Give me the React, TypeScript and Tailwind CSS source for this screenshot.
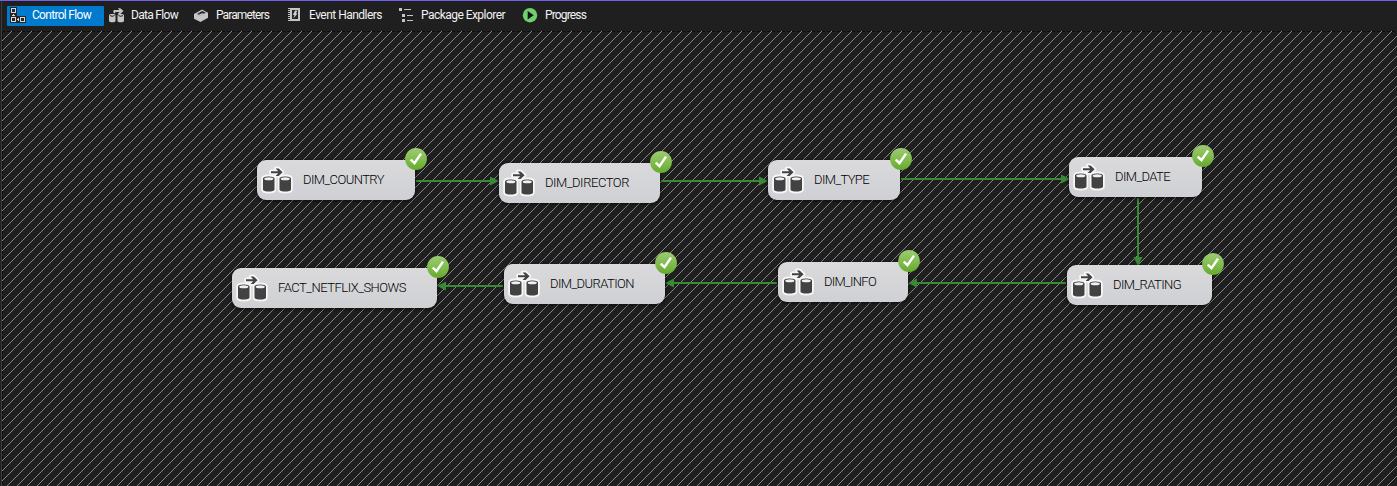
import React from "react";

type NodeSpec = { label: string; box: string; text: string };

const nodes: NodeSpec[] = [
  { label: "DIM_COUNTRY", box: "left-[255px] top-[129px] w-[158px]", text: "w-[81px]" },
  { label: "DIM_DIRECTOR", box: "left-[497px] top-[132px] w-[161px]", text: "w-[84px]" },
  { label: "DIM_TYPE", box: "left-[766px] top-[129px] w-[132px]", text: "w-[55px]" },
  { label: "DIM_DATE", box: "left-[1067px] top-[126px] w-[133px]", text: "w-[55px]" },
  { label: "DIM_RATING", box: "left-[1065px] top-[234px] w-[145px]", text: "w-[68px]" },
  { label: "DIM_INFO", box: "left-[776px] top-[231px] w-[130px]", text: "w-[52px]" },
  { label: "DIM_DURATION", box: "left-[502px] top-[233px] w-[161px]", text: "w-[84px]" },
  { label: "FACT_NETFLIX_SHOWS", box: "left-[230px] top-[237px] w-[205px]", text: "w-[128px]" },
];

const links = [
  { line: "M416 181H491", head: "M490 176.5L499 181L490 185.5Z" },
  { line: "M661 181H760", head: "M759 176.5L768 181L759 185.5Z" },
  { line: "M901 179H1062", head: "M1061 174.5L1070 179L1061 183.5Z" },
  { line: "M1138 198V258", head: "M1133.5 257H1142.5L1138 266Z" },
  { line: "M1066 283H916", head: "M917 278.5L908 283L917 287.5Z" },
  { line: "M777 283H673", head: "M674 278.5L665 283L674 287.5Z" },
  { line: "M503 286H445", head: "M446 281.5L437 286L446 290.5Z" },
];

const hatch = [0, 1, 2, 3, 4, 5, 6, 7, 8, 9];

function Cylinders() {
  const shape =
    "M6 18.5C6 15.7 17.5 15.7 17.5 18.5V29.5C17.5 32.3 6 32.3 6 29.5ZM22.5 18.5C22.5 15.7 34 15.7 34 18.5V29.5C34 32.3 22.5 32.3 22.5 29.5Z";
  const arrow = "M14 11.2H21.2L18.6 8.4H21.6L25.6 12.2L21.6 16H18.6L21.2 13.2H14Z";
  return (
    <svg className="h-10 w-10 shrink-0" viewBox="0 0 40 40">
      <g fill="#f6f6f6" stroke="#f6f6f6" strokeWidth="3.6" strokeLinejoin="round">
        <path d={shape} />
        <path d={arrow} />
      </g>
      <path d={shape} fill="#424242" />
      <ellipse cx="11.75" cy="18.7" rx="4.5" ry="1.5" fill="#f0eff1" />
      <ellipse cx="28.25" cy="18.7" rx="4.5" ry="1.5" fill="#f0eff1" />
      <path d={arrow} fill="#424242" />
    </svg>
  );
}

function Success() {
  return (
    <svg className="absolute -right-3 -top-3 h-[22px] w-[22px]" viewBox="0 0 22 22">
      <defs>
        <linearGradient id="success" x1="0" y1="0" x2="0" y2="1">
          <stop offset="0" stopColor="#9ccb72" />
          <stop offset="0.5" stopColor="#83bd50" />
          <stop offset="1" stopColor="#66a92d" />
        </linearGradient>
      </defs>
      <circle cx="11" cy="11" r="10.9" fill="url(#success)" />
      <path d="M5.7 11.6L9.5 15.2L16 5.6" fill="none" stroke="#fff" strokeWidth="2.5" />
    </svg>
  );
}

function TaskNode({ label, box, text }: NodeSpec) {
  return (
    <div
      className={`absolute flex h-10 items-center rounded-[9px] bg-gradient-to-b from-[#dadadd] to-[#cfd0d3] shadow-[0_1px_3px_1px_rgba(0,0,0,0.45)] ${box}`}
    >
      <Cylinders />
      <Fit text={label} className={`ml-[6px] text-[13px] font-light text-black ${text}`} />
      <Success />
    </div>
  );
}

/* Spreads the label's letters so that it fills the width of its slot. */
function Fit({ text, className }: { text: string; className: string }) {
  const slot = React.useRef<HTMLSpanElement>(null);
  const inner = React.useRef<HTMLSpanElement>(null);
  const [spacing, setSpacing] = React.useState(0);
  React.useLayoutEffect(() => {
    if (!slot.current || !inner.current) return;
    const natural = inner.current.getBoundingClientRect().width;
    setSpacing((slot.current.clientWidth - natural) / text.length);
  }, [text]);
  return (
    <span ref={slot} className={`block shrink-0 whitespace-nowrap leading-4 ${className}`}>
      <span ref={inner} style={{ letterSpacing: spacing }}>
        {text}
      </span>
    </span>
  );
}

function ControlFlowIcon() {
  return (
    <svg className="mb-0.5 h-4 w-4 shrink-0" viewBox="0 0 16 16" shapeRendering="crispEdges">
      <path d="M0 0H7V9H16V16H0Z" fill="#252526" />
      <path d="M1 1H6V6H1ZM1 10H6V15H1ZM10 10H15V15H10Z" fill="#d8d8d8" />
      <path d="M2 2H5V5H2ZM2 11H5V14H2ZM11 11H14V14H11Z" fill="#252526" />
      <path d="M3 7H4V9H3ZM2 8H5V9H2ZM7 12H9V13H7ZM8 11H9V14H8Z" fill="#d8d8d8" />
    </svg>
  );
}

function DataFlowIcon() {
  return (
    <svg className="h-4 w-4 shrink-0" viewBox="0 0 16 16" fill="#c5c5c5">
      <path d="M0 7.2C0 5.6 6.5 5.6 6.5 7.2V13C6.5 14.8 0 14.8 0 13ZM8.5 7.2C8.5 5.6 15 5.6 15 7.2V13C15 14.8 8.5 14.8 8.5 13Z" />
      <path d="M1 7.6Q3.25 9 5.5 7.6M9.5 7.6Q11.75 9 14 7.6" fill="none" stroke="#1f1f1f" strokeWidth="1" />
      <path d="M4.5 2H10.5L8.7 .2H11.3L14.5 3L11.3 5.9H8.7L10.5 4H6.3V5.2H4.5Z" />
    </svg>
  );
}

function ParametersIcon() {
  return (
    <svg className="h-4 w-4 shrink-0" viewBox="0 0 16 16">
      <path d="M0 6L8 1.6L14 4.8V9.8L6.5 14L0 10.8Z" fill="#c5c5c5" />
      <path d="M3 6L8.2 3.1L11.8 4.8L6.5 7.8Z" fill="#252526" />
      <path d="M4.2 6.8L8.3 5.2L10.5 5.8L6.5 8Z" fill="#c5c5c5" />
    </svg>
  );
}

function EventIcon() {
  return (
    <svg className="h-4 w-4 shrink-0" viewBox="0 0 16 16">
      <path d="M2 0H12V13H2Z" fill="#c5c5c5" />
      <path d="M4 2H10V11H4Z" fill="#252526" />
      <path d="M0 .5H3M0 2.5H3M0 4.5H3M0 6.5H3M0 8.5H3M0 10.5H3M0 12.5H3" stroke="#c5c5c5" />
      <path d="M7 2.5H9.4L8 5.5H9.5L5.4 10.5L6.5 7H4.8Z" fill="#d0d0d0" />
    </svg>
  );
}

function PackageIcon() {
  return (
    <svg className="h-4 w-4 shrink-0" viewBox="0 0 16 16" fill="#c5c5c5" shapeRendering="crispEdges">
      <path d="M0 0H3V3H0ZM5 1H12V2H5ZM3 6H6V9H3ZM8 7H14V8H8ZM3 11H6V14H3ZM8 12H14V13H8Z" />
    </svg>
  );
}

function ProgressIcon() {
  return (
    <svg className="h-4 w-4 shrink-0" viewBox="0 0 16 16">
      <circle cx="8" cy="7.2" r="7.2" fill="#6fcf70" />
      <path d="M5.7 3L11.7 7.2L5.7 11.4Z" fill="#111" />
    </svg>
  );
}

const tabs = [
  { label: "Data Flow", icon: <DataFlowIcon />, tab: "w-[85px]", text: "w-[47px] ml-[6px]" },
  { label: "Parameters", icon: <ParametersIcon />, tab: "w-[94px]", text: "w-[53px] ml-[6px]" },
  { label: "Event Handlers", icon: <EventIcon />, tab: "w-[111px]", text: "w-[73px] ml-[5px]" },
  { label: "Package Explorer", icon: <PackageIcon />, tab: "w-[123px]", text: "w-[84px] ml-[6px]" },
  { label: "Progress", icon: <ProgressIcon />, tab: "w-[80px]", text: "w-[41px] ml-[7px]" },
];

export default function App() {
  return (
    <div className="flex h-[486px] w-[1397px] flex-col overflow-hidden border-t border-[#7160e8] bg-[#1f1f1f] font-['Roboto',sans-serif]">
      <div className="flex min-h-0 flex-1">
        <div className="w-0.5 shrink-0 border-r border-[#3d3d3d]" />
        <main className="flex min-w-0 flex-1 flex-col">
          <nav className="flex h-[30px] shrink-0 items-start pl-[5px] pt-[5px] text-[12px] text-[#f1f1f1]">
            <div className="mr-[5px] flex h-5 w-[97px] items-center rounded-[1px] bg-[#007acc] pl-[3px]">
              <ControlFlowIcon />
              <Fit text="Control Flow" className="ml-[6px] w-[59px] pb-0.5 text-white" />
            </div>
            {tabs.map((t) => (
              <div key={t.label} className={`flex h-5 items-center ${t.tab}`}>
                {t.icon}
                <Fit text={t.label} className={`pb-0.5 ${t.text}`} />
              </div>
            ))}
          </nav>
          <section className="relative flex-1">
            <svg className="absolute inset-0 h-full w-full" viewBox="2 31 1395 455">
              <defs>
                <pattern id="hatch" width="10" height="10" patternUnits="userSpaceOnUse">
                  {hatch.map((i) => (
                    <rect key={i} x={i} y={(12 - i) % 10} width="1" height="1" fill="#888888" />
                  ))}
                </pattern>
              </defs>
              <rect x="2" y="31" width="1395" height="455" fill="url(#hatch)" />
              <path d="M2 31.5H1397M2.5 31V486" stroke="#0c0c0c" strokeDasharray="3 2" />
              {links.map((l) => (
                <g key={l.line}>
                  <path d={l.line} stroke="#388a34" strokeWidth="2" />
                  <path d={l.head} fill="#388a34" />
                </g>
              ))}
            </svg>
            {nodes.map((n) => (
              <TaskNode key={n.label} {...n} />
            ))}
          </section>
        </main>
      </div>
    </div>
  );
}
